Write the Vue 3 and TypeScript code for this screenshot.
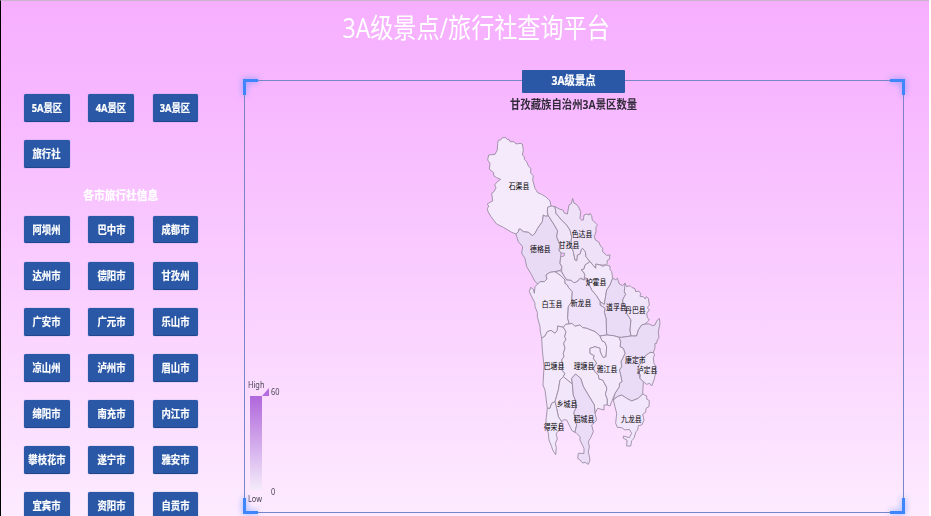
<script setup lang="ts">
interface County {
  name: string
  x: number
  y: number
  fill: string
  points: string
}

const categories: string[] = ['5A景区', '4A景区', '3A景区', '旅行社']

const cities: string[] = [
  '阿坝州', '巴中市', '成都市',
  '达州市', '德阳市', '甘孜州',
  '广安市', '广元市', '乐山市',
  '凉山州', '泸州市', '眉山市',
  '绵阳市', '南充市', '内江市',
  '攀枝花市', '遂宁市', '雅安市',
  '宜宾市', '资阳市', '自贡市',
]

const counties: County[] = [
  { name: '石渠县', x: 147, y: 182, fill: '#f4eafb', points: '83,55 85,46 93,44 97,38 108,38 112,44 118,44 120,50 132,50 138,57 150,55 157,57 160,75 157,90 163,95 163,103 170,110 175,123 182,130 182,145 190,152 188,165 195,190 203,203 215,208 228,216 240,228 243,243 233,247 232,262 235,272 227,274 220,270 217,290 210,300 203,310 195,325 187,332 175,322 160,320 152,313 147,312 145,320 138,327 125,322 100,307 80,297 63,275 54,260 52,250 57,243 51,238 55,235 68,228 65,205 72,200 78,188 74,180 80,172 92,163 80,158 72,153 70,142 58,133 60,115 53,105 56,90 75,88 82,75' },
  { name: '德格县', x: 211, y: 372, fill: '#e9daf6', points: '138,327 145,320 147,312 152,313 160,320 175,322 187,332 195,325 203,310 210,300 217,290 220,270 227,274 235,272 243,285 253,300 263,318 260,335 270,360 267,375 273,384 272,395 270,415 276,425 275,430 270,437 255,440 240,442 228,450 231,462 223,470 210,470 203,477 194,468 185,450 170,425 165,400 155,385 158,365 145,350 140,335' },
  { name: '甘孜县', x: 297, y: 360, fill: '#f0e4f9', points: '233,247 243,243 255,245 258,265 270,280 275,285 290,300 300,315 305,335 303,355 310,380 315,405 320,407 322,390 330,387 334,373 338,370 346,380 348,395 360,410 345,420 342,432 333,435 340,440 345,450 342,465 335,460 330,460 324,468 315,473 310,472 303,466 290,465 280,450 275,440 275,430 276,425 270,415 272,395 282,393 284,385 273,384 267,375 270,360 260,335 263,318 253,300 235,272 232,262' },
  { name: '色达县', x: 336, y: 326, fill: '#eee1f8', points: '308,220 312,235 318,237 325,245 332,260 330,280 335,286 340,285 342,270 350,267 358,270 360,265 365,272 367,285 376,294 383,300 378,305 378,320 373,335 377,346 386,350 390,360 398,370 398,380 410,391 420,390 418,403 412,406 411,416 407,420 390,420 378,417 377,430 360,410 348,395 346,380 338,370 334,373 330,387 322,390 320,407 315,405 310,380 303,355 305,335 300,315 290,300 275,285 258,265 255,245 270,253 279,255 283,264 292,267 297,240 304,236' },
  { name: '炉霍县', x: 378, y: 472, fill: '#f3e8fb', points: '360,410 377,430 378,417 390,420 399,424 407,420 420,423 420,434 425,440 428,460 420,480 410,495 405,525 403,538 390,530 380,513 365,495 358,480 350,460 342,457 345,450 340,440 333,435 342,432 345,420' },
  { name: '道孚县', x: 439, y: 546, fill: '#eadcf7', points: '428,460 437,464 442,460 448,477 457,482 465,475 468,485 463,500 467,508 463,515 458,525 460,540 470,545 470,565 483,585 480,615 483,633 455,637 447,637 430,632 410,630 408,580 403,562 405,550 390,540 390,530 403,538 405,525 410,495 420,480' },
  { name: '丹巴县', x: 496, y: 556, fill: '#f0e4fa', points: '465,475 470,485 480,482 485,487 495,491 497,500 506,498 512,505 510,514 520,515 526,522 529,515 535,520 538,540 532,548 538,555 530,565 532,577 538,585 525,597 515,600 505,615 500,633 483,633 480,615 483,585 470,565 470,545 460,540 458,525 463,515 467,508 463,500' },
  { name: '白玉县', x: 246, y: 538, fill: '#f2e7fb', points: '203,477 210,470 223,470 231,462 228,450 240,442 255,440 270,450 285,465 285,475 292,480 296,488 307,500 305,530 295,545 293,580 298,597 287,598 280,607 263,603 262,616 255,625 243,616 232,620 225,633 215,640 211,620 210,605 202,575 202,562 195,545 195,535 185,515 178,500 182,487 190,493 193,505 195,485' },
  { name: '新龙县', x: 333, y: 535, fill: '#eee1f9', points: '255,440 270,437 275,440 280,450 290,465 303,466 310,472 315,473 324,468 330,460 342,465 350,460 358,480 365,495 380,513 390,530 390,540 405,550 403,562 408,580 410,630 390,633 375,620 350,610 338,608 330,600 315,604 306,595 298,597 293,580 295,545 305,530 307,500 296,488 292,480 285,475 285,465 270,450' },
  { name: '康定市', x: 496, y: 706, fill: '#eadbf6', points: '447,637 455,637 483,633 500,633 505,615 515,600 525,597 538,597 547,602 555,600 560,588 568,580 570,595 565,620 567,640 562,644 560,655 555,655 555,668 550,683 540,682 530,690 520,698 515,710 505,725 505,740 510,760 520,770 518,807 505,820 485,828 470,820 455,810 442,815 430,825 435,805 448,785 448,775 456,770 452,750 448,735 455,725 453,710 465,685 460,670 450,665 452,650' },
  { name: '泸定县', x: 531, y: 735, fill: '#f1e6fa', points: '550,683 554,690 550,698 552,715 558,725 555,733 558,740 552,765 545,783 539,775 530,778 520,770 510,760 511,750 505,740 505,725 515,710 520,698 530,690 540,682' },
  { name: '巴塘县', x: 252, y: 723, fill: '#f3e8fb', points: '215,640 225,633 232,620 243,616 255,625 262,616 263,603 280,607 288,620 284,635 288,643 281,655 285,670 280,685 282,695 275,705 279,720 275,735 285,745 280,755 270,765 265,795 255,830 245,835 240,850 232,850 225,795 219,780 222,725 217,675' },
  { name: '理塘县', x: 342, y: 724, fill: '#f4e9fb', points: '280,607 287,598 298,597 306,595 315,604 330,600 338,608 350,610 375,620 390,633 396,647 405,652 410,665 408,695 400,698 395,690 390,678 390,670 375,665 360,670 360,685 373,692 370,700 380,714 370,730 376,742 385,750 387,762 398,765 410,787 410,795 406,807 412,822 412,840 402,840 402,855 383,850 375,865 373,840 355,810 340,785 332,760 317,747 305,760 307,777 292,765 280,755 285,745 275,735 279,720 275,705 282,695 280,685 285,670 281,655 288,643 284,635 288,620' },
  { name: '雅江县', x: 411, y: 731, fill: '#f2e7fb', points: '390,633 410,630 430,632 447,637 452,650 450,665 460,670 465,685 453,710 455,725 448,735 452,750 456,770 448,775 448,785 435,805 425,830 420,843 412,840 412,822 406,807 410,795 410,787 398,765 387,762 385,750 376,742 370,730 380,714 370,700 373,692 360,685 360,670 375,665 390,670 390,678 395,690 400,698 408,695 410,665 405,652 396,647' },
  { name: '乡城县', x: 291, y: 838, fill: '#f1e6fa', points: '280,755 292,765 307,777 310,810 316,825 320,845 312,862 315,885 320,900 315,922 306,917 300,905 290,885 282,884 275,890 265,875 260,850 255,830 265,795 270,765' },
  { name: '稻城县', x: 342, y: 882, fill: '#ebddf7', points: '317,747 332,760 340,785 355,810 373,840 375,865 380,885 374,892 365,900 370,920 362,938 355,950 358,966 355,980 360,1005 355,1018 345,1012 338,1014 330,1005 323,1000 325,985 342,985 342,970 330,945 330,935 320,925 315,922 320,900 315,885 312,862 320,845 316,825 310,810 307,777 305,760' },
  { name: '得荣县', x: 252, y: 906, fill: '#f2e8fb', points: '232,850 240,850 245,835 255,830 260,850 265,875 275,890 268,900 269,915 258,925 262,942 256,955 259,968 257,989 248,975 245,965 237,945 235,925 228,905 228,885' },
  { name: '九龙县', x: 484, y: 883, fill: '#f1e6fb', points: '430,825 442,815 455,810 470,820 485,828 505,820 518,807 530,813 530,822 538,827 537,845 528,850 527,862 518,868 522,885 515,900 505,902 503,915 498,920 492,940 485,947 482,963 470,963 471,945 460,940 460,933 478,938 485,925 478,913 465,915 455,908 442,907 437,895 440,865 435,845' },
]
</script>

<template>
  <div class="page">
    <h1 class="title"><span>3A级景点/旅行社查询平台</span></h1>
    <div class="content">
      <aside class="sidebar">
        <div class="grid">
          <button v-for="c in categories" :key="c" class="btn"><span>{{ c }}</span></button>
        </div>
        <h2 class="subtitle"><span>各市旅行社信息</span></h2>
        <div class="grid">
          <button v-for="c in cities" :key="c" class="btn"><span>{{ c }}</span></button>
        </div>
      </aside>
      <main class="panel">
        <i class="corner tl"></i><i class="corner tr"></i>
        <i class="corner bl"></i><i class="corner br"></i>
        <div class="tab"><span>3A级景点</span></div>
        <div class="chart-title"><span>甘孜藏族自治州3A景区数量</span></div>
        <svg class="map" viewBox="0 0 600 1035">
          <polygon v-for="c in counties" :key="c.name" :points="c.points" :fill="c.fill" class="county" />
          <text
            v-for="c in counties"
            :key="c.name + '-label'"
            :x="c.x"
            :y="c.y + 9"
            textLength="62"
            lengthAdjust="spacingAndGlyphs"
            class="label"
          >{{ c.name }}</text>
        </svg>
        <div class="legend">
          <div class="end">High</div>
          <div class="scale">
            <div class="bar"></div>
            <svg class="handle" width="7" height="8" viewBox="0 0 7 8"><path d="M0 8L7 0V8Z" fill="#b56bdf" /></svg>
            <div class="values"><span>60</span><span>0</span></div>
          </div>
          <div class="end">Low</div>
        </div>
      </main>
    </div>
  </div>
</template>

<style>
body {
  overflow: hidden;
  background: #fff;
}
</style>

<style scoped>
.page {
  box-sizing: border-box;
  width: 929px;
  height: 516px;
  overflow: hidden;
  border-left: 1px solid #000;
  border-top: 1px solid #c9b3cd;
  background: linear-gradient(180deg, #f6afff 0%, #f7b8ff 20%, #fdebff 100%);
  font-family: "Open Sans", "Noto Sans CJK SC", sans-serif;
}
.title {
  margin: 0;
  height: 79px;
  padding-left: 23px;
  text-align: center;
  font-size: 27.5px;
  font-weight: 400;
  line-height: 54px;
  color: #fff;
}
.title span {
  display: inline-block;
  transform: scaleX(0.84);
  white-space: nowrap;
}
.content {
  display: flex;
}
.sidebar {
  width: 220px;
  padding: 14px 0 0 23px;
  box-sizing: border-box;
  margin-right: 23px;
}
.grid {
  display: grid;
  grid-template-columns: repeat(3, 45.6px);
  column-gap: 18.7px;
  row-gap: 18.4px;
}
.btn {
  height: 27.7px;
  padding: 0;
  border: 0;
  border-bottom: 1px solid #1f468c;
  border-radius: 2px;
  background: #2a58a6;
  box-shadow: 0 0 1px #3c64ab;
  color: #fff;
  font-family: inherit;
  font-size: 11px;
  font-weight: 700;
  line-height: 27px;
  white-space: nowrap;
}
.btn span {
  display: inline-block;
  margin: 0 -6px;
  transform: scaleX(0.85);
  -webkit-text-stroke: 0.2px #fff;
}
.subtitle {
  margin: 18px 0 11px;
  padding-right: 3px;
  height: 19px;
  line-height: 19px;
  text-align: center;
  font-size: 12.5px;
  font-weight: 700;
  color: #fff;
}
.subtitle span {
  display: inline-block;
  transform: scaleX(0.855);
  -webkit-text-stroke: 0.2px #fff;
}
.panel {
  position: relative;
  box-sizing: border-box;
  width: 660px;
  height: 433px;
  border: 1px solid #7886c9;
  display: flex;
  flex-direction: column;
  align-items: center;
}
.corner {
  position: absolute;
  width: 12px;
  height: 13px;
  border: 0 solid #3f86fc;
  filter: drop-shadow(0 0 3px rgba(63, 134, 252, 0.7));
}
.tl { left: -2px; top: -2px; border-width: 3px 0 0 3px; }
.tr { right: -2px; top: -2px; border-width: 3px 3px 0 0; }
.bl { left: -2px; bottom: -2px; border-width: 0 0 3px 3px; }
.br { right: -2px; bottom: -2px; border-width: 0 3px 3px 0; }
.tab {
  width: 103px;
  height: 23px;
  margin: -11px 1.5px 0 0;
  border-radius: 1px;
  background: #2a58a6;
  color: #fff;
  font-size: 12px;
  font-weight: 700;
  line-height: 22px;
  text-align: center;
}
.tab span,
.chart-title span {
  display: inline-block;
  transform: scaleX(0.865);
  white-space: nowrap;
}
.tab span {
  -webkit-text-stroke: 0.2px #fff;
}
.chart-title {
  height: 20px;
  margin-top: 2px;
  line-height: 20px;
  font-size: 12px;
  font-weight: 700;
  color: #332c3b;
}
.map {
  flex: none;
  width: 200px;
  height: 345px;
  margin: 10px 0 0 -9px;
}
.county {
  stroke: #97899f;
  stroke-width: 2.6;
  stroke-linejoin: round;
}
.label {
  font-size: 23px;
  fill: #000;
  text-anchor: middle;
}
.legend {
  position: absolute;
  left: 3px;
  bottom: 8.5px;
  color: #4b4552;
  font-family: "Noto Sans", "Open Sans", sans-serif;
  font-size: 9px;
  line-height: 11px;
}
.end,
.values span {
  transform: scaleX(0.82);
  transform-origin: left center;
}
.scale {
  display: flex;
  height: 94px;
  margin: 5.5px 0 3px 2px;
}
.bar {
  width: 12px;
  background: linear-gradient(#b067dc, #f4ebfa);
}
.handle {
  margin-top: -8px;
}
.values {
  display: flex;
  flex-direction: column;
  justify-content: space-between;
  margin: -10px 0 -7px 2px;
}
</style>
